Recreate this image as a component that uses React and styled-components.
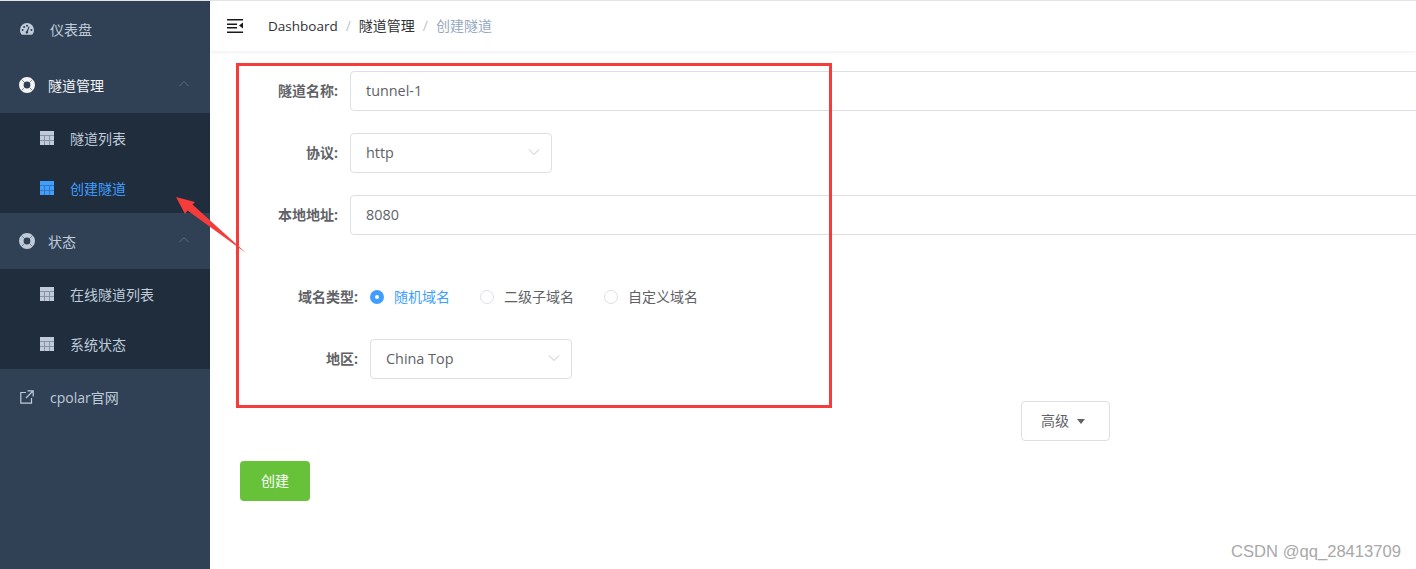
import React from "react";
import styled, { createGlobalStyle } from "styled-components";

const GlobalStyles = createGlobalStyle`
    html, body {
        margin: 0;
        padding: 0;
        background: #fff;
    }
    body {
        font-family: "Open Sans", "Noto Sans CJK SC", sans-serif;
        font-size: 14px;
        color: #606266;
        overflow: hidden;
    }
`;

const Page = styled.div`
    position: relative;
    display: flex;
    width: 1416px;
    height: 569px;
    overflow: hidden;
    border-top: 1px solid #e4e4e4;
    box-sizing: border-box;
`;

const Sidebar = styled.aside`
    flex: 0 0 210px;
    background: #304156;
    font-size: 14px;
`;

const MenuRow = styled.div`
    display: flex;
    align-items: center;
    height: 56px;
    padding-left: ${(p) => p.$pad ?? 20}px;
    color: ${(p) => (p.$open ? "#f4f4f5" : "#bfcbd9")};
    position: relative;
    svg { flex: none; }
`;

const MenuText = styled.span`
    margin-left: ${(p) => p.$gap}px;
`;

const Caret = styled.svg`
    position: absolute;
    right: 20px;
    top: 23px;
`;

const SubMenu = styled.div`
    background: #1f2d3d;
`;

const SubRow = styled.div`
    display: flex;
    align-items: center;
    height: 50px;
    padding-left: 40px;
    color: ${(p) => (p.$active ? "#409eff" : "#bfcbd9")};
`;

const SubText = styled.span`
    margin-left: 16px;
`;

const Content = styled.div`
    flex: 1;
    min-width: 0;
    display: flex;
    flex-direction: column;
`;

const Navbar = styled.header`
    flex: 0 0 50px;
    display: flex;
    align-items: center;
    padding-left: 17px;
    box-shadow: 0 1px 4px rgba(0, 21, 41, 0.08);
`;

const Crumbs = styled.nav`
    display: flex;
    align-items: baseline;
    margin-left: 25px;
    margin-top: -2px;
    font-size: 14px;
`;

const Crumb = styled.span`
    color: ${(p) => (p.$last ? "#97a8be" : "#303133")};
    font-size: ${(p) => p.$size ?? 14}px;
`;

const Slash = styled.span`
    color: #c0c4cc;
    margin: 0 8px;
`;

const Main = styled.main`
    padding: 20px 0 0 30px;
`;

const FormRow = styled.div`
    display: flex;
    align-items: center;
    height: 40px;
    margin-bottom: ${(p) => p.$bottom ?? 22}px;
`;

const Label = styled.label`
    flex: none;
    width: ${(p) => p.$width}px;
    padding-right: 12px;
    box-sizing: border-box;
    text-align: right;
    font-size: 14px;
    font-weight: 700;
    color: #606266;
    position: relative;
    top: -1px;
`;

const TextInput = styled.div`
    flex: none;
    width: 1100px;
    height: 40px;
    box-sizing: border-box;
    display: flex;
    align-items: center;
    padding: 0 15px 2px;
    border: 1px solid #dcdfe6;
    border-radius: 4px;
    font-size: 14.4px;
    color: #606266;
`;

const SelectBox = styled(TextInput)`
    width: 202px;
    justify-content: space-between;
    padding-right: 11px;
`;

const RadioGroup = styled.div`
    display: flex;
    align-items: center;
    gap: 30px;
`;

const Radio = styled.div`
    display: flex;
    align-items: center;
    gap: 10px;
    font-size: 14px;
    padding-bottom: 2px;
    color: ${(p) => (p.$checked ? "#409eff" : "#606266")};
`;

const RadioDot = styled.span`
    width: 14px;
    height: 14px;
    margin-top: 2px;
    box-sizing: border-box;
    border-radius: 50%;
    border: ${(p) => (p.$checked ? "5px solid #409eff" : "1px solid #dcdfe6")};
    background: #fff;
`;

const AdvancedButton = styled.div`
    display: flex;
    align-items: center;
    gap: 8px;
    width: 89px;
    height: 40px;
    box-sizing: border-box;
    margin: 0 0 20px 781px;
    padding: 0 0 2px 19px;
    border: 1px solid #dcdfe6;
    border-radius: 4px;
    font-size: 14px;
    color: #606266;
`;

const Triangle = styled.span`
    width: 0;
    height: 0;
    margin-top: 3px;
    border-left: 4.5px solid transparent;
    border-right: 4.5px solid transparent;
    border-top: 5px solid #606266;
`;

const CreateButton = styled.div`
    display: flex;
    align-items: center;
    justify-content: center;
    width: 70px;
    height: 40px;
    box-sizing: border-box;
    padding-bottom: 2px;
    border-radius: 4px;
    background: #67c23a;
    color: #fff;
    font-size: 14px;
`;

const RedBox = styled.div`
    position: absolute;
    left: 236px;
    top: 62px;
    width: 596px;
    height: 345px;
    box-sizing: border-box;
    border: 3px solid #f63b3b;
    pointer-events: none;
`;

const ArrowMark = styled.svg`
    position: absolute;
    left: 170px;
    top: 189px;
`;

const Watermark = styled.div`
    position: absolute;
    right: 15px;
    bottom: 7px;
    font-family: "Liberation Sans", sans-serif;
    font-size: 16.6px;
    color: #a8a8a8;
`;

const GaugeIcon = () => (
    <svg width="14" height="14" viewBox="0 0 14 14">
        <path fill="currentColor" fillRule="evenodd" d="M7 1a7 7 0 0 0-7 7c0 1.600.5 3 1.400 4.200.2.3.5.5.8.5h9.600c.3 0 .6-.2.8-.5C13.500 11 14 9.600 14 8a7 7 0 0 0-7-7zM2.600 8.900a1 1 0 1 1 0-2 1 1 0 0 1 0 2zm1.500-3a1 1 0 1 1 0-2 1 1 0 0 1 0 2zM7 4.700a1 1 0 1 1 0-2 1 1 0 0 1 0 2zm4.400 4.200a1 1 0 1 1 0-2 1 1 0 0 1 0 2zM9.600 4.800 7.900 9.400a1.300 1.300 0 1 1-1.300-.4l2.100-4.500z" />
    </svg>
);

const BuoyIcon = () => (
    <svg width="16" height="16" viewBox="0 0 16 16">
        <circle cx="8" cy="8" r="5.700" fill="none" stroke="currentColor" strokeWidth="4.600" />
        <path stroke="#304156" strokeOpacity="0.55" strokeWidth="1" d="M2.300 2.300l3.300 3.300M13.700 2.300l-3.300 3.300M2.300 13.700l3.300-3.300M13.700 13.700l-3.300-3.300" />
    </svg>
);

const GridIcon = () => (
    <svg width="14" height="14" viewBox="0 0 14 14">
        <rect width="14" height="14" fill="currentColor" />
        <path fill="#1f2d3d" opacity="0.35" d="M0 4h14v1H0zM0 9h14v1H0zM4 5h1v9H4zM9 5h1v9H9z" />
    </svg>
);

const LinkIcon = () => (
    <svg width="14" height="14" viewBox="0 0 14 14" fill="none" stroke="currentColor" strokeWidth="1.200">
        <path d="M6 2.500H.8v10.700h10.700V8M7.500.8h5.700v5.700M13 1 6 8" />
    </svg>
);

const ToggleIcon = () => (
    <svg width="16" height="14" viewBox="0 0 16 14">
        <path fill="#1a1a1a" d="M0 0h16v1.500H0zM0 4.500h10v1.500H0zM0 8h10v1.500H0zM0 12.500h16V14H0zM16 3.500v6l-4-3z" />
    </svg>
);

const UpCaret = () => (
    <Caret width="12" height="8" viewBox="0 0 12 8" fill="none" stroke="#5d6a7b" strokeWidth="1">
        <path d="M1.500 6 6 1.500 10.500 6" />
    </Caret>
);

const Chevron = () => (
    <svg width="12" height="8" viewBox="0 0 12 8" fill="none" stroke="#c0c4cc" strokeWidth="1">
        <path d="M1 1.500 6 6.500 11 1.500" />
    </svg>
);

function App() {
    return (
        <Page>
            <GlobalStyles />
            <Sidebar>
                <MenuRow>
                    <GaugeIcon />
                    <MenuText $gap={16}>仪表盘</MenuText>
                </MenuRow>
                <MenuRow $open $pad={19}>
                    <BuoyIcon />
                    <MenuText $gap={13}>隧道管理</MenuText>
                    <UpCaret />
                </MenuRow>
                <SubMenu>
                    <SubRow>
                        <GridIcon />
                        <SubText>隧道列表</SubText>
                    </SubRow>
                    <SubRow $active>
                        <GridIcon />
                        <SubText>创建隧道</SubText>
                    </SubRow>
                </SubMenu>
                <MenuRow $pad={19}>
                    <BuoyIcon />
                    <MenuText $gap={13}>状态</MenuText>
                    <UpCaret />
                </MenuRow>
                <SubMenu>
                    <SubRow>
                        <GridIcon />
                        <SubText>在线隧道列表</SubText>
                    </SubRow>
                    <SubRow>
                        <GridIcon />
                        <SubText>系统状态</SubText>
                    </SubRow>
                </SubMenu>
                <MenuRow>
                    <LinkIcon />
                    <MenuText $gap={16}>cpolar官网</MenuText>
                </MenuRow>
            </Sidebar>
            <Content>
                <Navbar>
                    <ToggleIcon />
                    <Crumbs>
                        <Crumb $size={13.5}>Dashboard</Crumb>
                        <Slash>/</Slash>
                        <Crumb>隧道管理</Crumb>
                        <Slash>/</Slash>
                        <Crumb $last>创建隧道</Crumb>
                    </Crumbs>
                </Navbar>
                <Main>
                    <FormRow>
                        <Label $width={110}>隧道名称:</Label>
                        <TextInput>tunnel-1</TextInput>
                    </FormRow>
                    <FormRow>
                        <Label $width={110}>协议:</Label>
                        <SelectBox>http<Chevron /></SelectBox>
                    </FormRow>
                    <FormRow $bottom={42}>
                        <Label $width={110}>本地地址:</Label>
                        <TextInput>8080</TextInput>
                    </FormRow>
                    <FormRow>
                        <Label $width={130}>域名类型:</Label>
                        <RadioGroup>
                            <Radio $checked><RadioDot $checked />随机域名</Radio>
                            <Radio><RadioDot />二级子域名</Radio>
                            <Radio><RadioDot />自定义域名</Radio>
                        </RadioGroup>
                    </FormRow>
                    <FormRow>
                        <Label $width={130}>地区:</Label>
                        <SelectBox>China Top<Chevron /></SelectBox>
                    </FormRow>
                    <AdvancedButton>高级<Triangle /></AdvancedButton>
                    <CreateButton>创建</CreateButton>
                </Main>
            </Content>
            <RedBox />
            <ArrowMark width="80" height="70" viewBox="0 0 80 70">
                <path fill="#f63b3b" d="M6 7 25 12 22.500 14.500 76 63 17.500 20.500 15 24z" />
            </ArrowMark>
            <Watermark>CSDN @qq_28413709</Watermark>
        </Page>
    );
}

export default App;
